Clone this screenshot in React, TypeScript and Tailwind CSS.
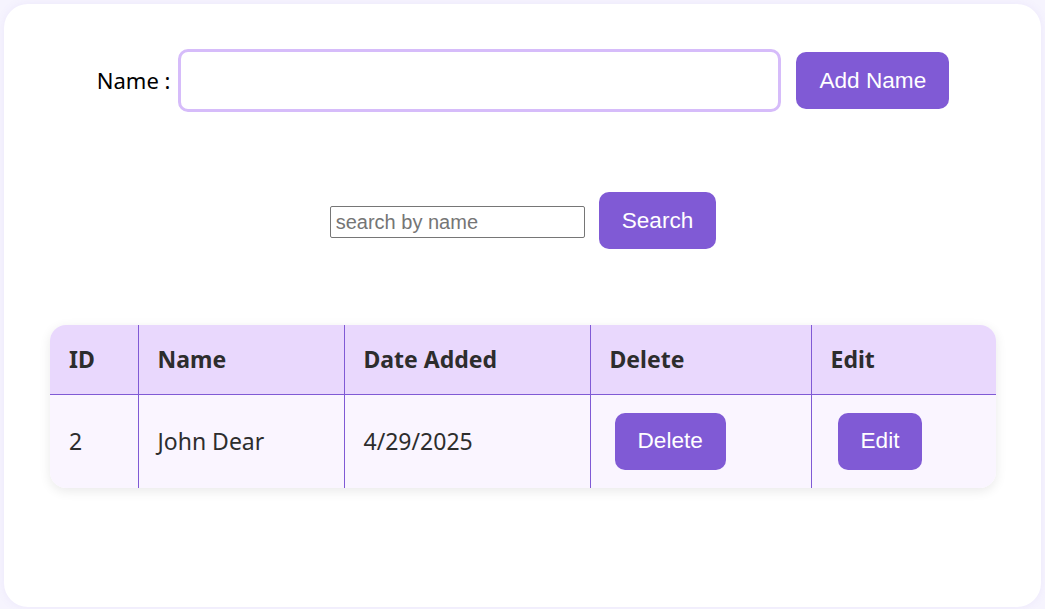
import React, { useState } from 'react';

interface Person {
  id: number;
  name: string;
  dateAdded: string;
}

const btn =
  "h-[57px] px-[23px] rounded-[10px] bg-[#805ad5] text-white text-[22.6px] font-['Liberation_Sans',Arial,sans-serif] hover:bg-[#6b46c1] transition";

export default function App() {
  const [name, setName] = useState('');
  const [query, setQuery] = useState('');
  const [people] = useState<Person[]>([{ id: 2, name: 'John Dear', dateAdded: '4/29/2025' }]);

  const th = "h-[69px] px-[19px] text-left font-bold text-[23px] text-[#2d2d2d] border-[#805ad5]";
  const td = "h-[94px] px-[19px] text-left text-[23px] text-[#2d2d2d] border-[#805ad5]";

  return (
    <div className="min-h-screen bg-[#f6f4fe] p-[4px] font-['Noto_Sans',sans-serif]">
      <div className="h-[603px] bg-white rounded-[24px] shadow-[0_0_10px_rgba(128,90,213,0.08)] pl-[46px] pr-[45px] pt-[45px]">
        <div className="flex items-center justify-center">
          <label className="text-[22px] text-black mr-[8px]">Name :</label>
          <input
            value={name}
            onChange={e => setName(e.target.value)}
            className="w-[603px] h-[63px] border-[3px] border-[#d6bcfa] rounded-[10px] px-3 text-[20px] outline-none"
          />
          <button className={`${btn} ml-[15px]`}>Add Name</button>
        </div>

        <div className="flex items-center justify-center mt-[80px]">
          <input
            value={query}
            onChange={e => setQuery(e.target.value)}
            placeholder="search by name"
            className="w-[255px] h-[32px] mt-[3px] border border-[#767676] rounded-[2px] px-[5px] text-[20px] font-['Liberation_Sans',Arial,sans-serif] placeholder:text-[#757575] outline-none"
          />
          <button className={`${btn} ml-[14px]`}>Search</button>
        </div>

        <div className="mt-[76px] rounded-[16px] overflow-hidden shadow-[0_3px_12px_rgba(0,0,0,0.09)]">
          <table className="w-full border-collapse table-fixed">
            <colgroup>
              <col className="w-[88px]" />
              <col className="w-[206px]" />
              <col className="w-[246px]" />
              <col className="w-[221px]" />
              <col className="w-[185px]" />
            </colgroup>
            <thead className="bg-[#e9d8fd]">
              <tr className="border-b border-[#805ad5]">
                <th className={th}>ID</th>
                <th className={`${th} border-l`}>Name</th>
                <th className={`${th} border-l`}>Date Added</th>
                <th className={`${th} border-l`}>Delete</th>
                <th className={`${th} border-l`}>Edit</th>
              </tr>
            </thead>
            <tbody className="bg-[#faf5ff]">
              {people.map(p => (
                <tr key={p.id}>
                  <td className={td}>{p.id}</td>
                  <td className={`${td} border-l`}>{p.name}</td>
                  <td className={`${td} border-l`}>{p.dateAdded}</td>
                  <td className={`${td} border-l`}>
                    <button className={`${btn} ml-[5px]`}>Delete</button>
                  </td>
                  <td className={`${td} border-l`}>
                    <button className={`${btn} ml-[7px]`}>Edit</button>
                  </td>
                </tr>
              ))}
            </tbody>
          </table>
        </div>
      </div>
    </div>
  );
}
